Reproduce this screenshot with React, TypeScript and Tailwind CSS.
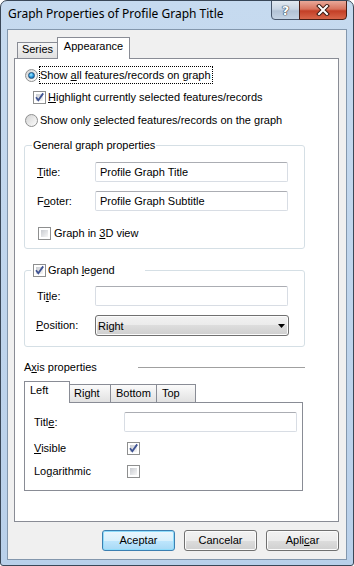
import type { ReactNode } from 'react';

/**
 * Graph properties dialog, Windows 7 look.
 */

const U = ({ children }: { children: ReactNode }) => (
  <span className="underline underline-offset-[1px] decoration-1">{children}</span>
);

const Radio = ({ checked = false }: { checked?: boolean }) => (
  <span className="w-[13px] h-[13px] shrink-0 rounded-full border border-[#8e8f8f] bg-[linear-gradient(135deg,#d3d3d3,#fdfdfd)] flex items-center justify-center">
    {checked && (
      <span className="w-[7px] h-[7px] rounded-full border border-[#1d4f7c] bg-[radial-gradient(circle_at_40%_35%,#a6ecff_0%,#2a9be0_50%,#125393_100%)]" />
    )}
  </span>
);

const Check = ({ checked = false }: { checked?: boolean }) => (
  <span className="relative w-[13px] h-[13px] shrink-0 border border-[#8e8f8f] bg-white p-[2px]">
    <span className="block w-full h-full bg-[linear-gradient(135deg,#c9ccd1,#f7f7f7)]" />
    {checked && (
      <svg className="absolute -left-px -top-px" width="13" height="13" viewBox="0 0 13 13">
        <path d="M3 6.3 L5.3 9.2 L10.2 2.4" stroke="#3f5393" strokeWidth="1.8" fill="none" />
      </svg>
    )}
  </span>
);

const TextBox = ({ value = '', width }: { value?: string; width: string }) => (
  <div
    className={`${width} h-[20px] border border-[#d8dde4] border-t-[#abadb3] rounded-[2px] bg-white flex items-center pl-[4px]`}
  >
    {value}
  </div>
);

const Button = ({ children, primary = false }: { children: ReactNode; primary?: boolean }) => (
  <div
    className={
      primary
        ? 'w-[73px] h-[21px] rounded-[3px] border border-[#3c7fb1] bg-[linear-gradient(#eaf6fd_0%,#d9f0fc_50%,#bee6fd_50%,#a7d9f5_100%)] shadow-[inset_0_0_0_1px_#8fdcfb] flex items-center justify-center'
        : 'w-[73px] h-[21px] rounded-[3px] border border-[#707070] bg-[linear-gradient(#f2f2f2_0%,#ebebeb_50%,#dddddd_50%,#cfcfcf_100%)] shadow-[inset_0_0_0_1px_#fbfbfb] flex items-center justify-center'
    }
  >
    <span>{children}</span>
  </div>
);

export default function App() {
  return (
    <div className="w-[354px] h-[566px] flex flex-col border border-[#3a4757] rounded-t-[7px] rounded-b-[3px] bg-[linear-gradient(#c6daef,#b9d0ea)] text-[11px] leading-[13px] text-black font-['Liberation_Sans',Arial,sans-serif] overflow-hidden">
      {/* Title bar */}
      <div className="h-[28px] flex items-start shrink-0">
        <span className="ml-[7px] mt-[5px] text-[12px] leading-[16px] font-['Noto_Sans',sans-serif] text-black">
          Graph Properties of Profile Graph Title
        </span>
        <div className="ml-auto mr-[6px] -mt-px flex">
          <div className="w-[29px] h-[20px] border border-[#46556a] rounded-bl-[4px] bg-[linear-gradient(#e2e9f1_0%,#c9d5e3_45%,#b2c2d5_55%,#c4d3e4_100%)] flex items-center justify-center text-[13px] font-bold text-white font-['DejaVu_Sans',sans-serif] [text-shadow:0_0_1px_#2b3746,0_0_1px_#2b3746,0_0_1px_#2b3746]">
            ?
          </div>
          <div className="-ml-px w-[48px] h-[20px] border border-[#4a1d14] rounded-br-[4px] bg-[linear-gradient(#e9a899_0%,#d8735d_45%,#c33f26_55%,#d8664a_100%)] flex items-center justify-center">
            <svg width="14" height="12" viewBox="0 0 14 12">
              <path d="M3 2 L11 10 M11 2 L3 10" stroke="#3b1a12" strokeWidth="4" strokeLinecap="square" />
              <path d="M3 2 L11 10 M11 2 L3 10" stroke="#ffffff" strokeWidth="2" strokeLinecap="square" />
            </svg>
          </div>
        </div>
      </div>

      {/* Client area */}
      <div className="flex-1 mx-[6px] mb-[5px] border border-[#8397ad] bg-[#f0f0f0] flex flex-col">
        <div className="ml-[6px] mt-[7px] w-[325px]">
          {/* Tab headers */}
          <div className="flex items-end h-[21px] pl-[3px]">
            <div className="w-[41px] h-[16px] border border-b-0 border-[#898c95] bg-[linear-gradient(#f6f6f6,#e0e0e0)] flex justify-center pt-0">
              Series
            </div>
            <div className="relative z-10 -ml-px -mb-px w-[73px] h-[22px] border border-b-0 border-[#898c95] bg-white flex justify-center pt-[2px]">
              Appearance
            </div>
          </div>

          {/* Tab panel */}
          <div className="h-[464px] border border-[#898c95] bg-white flex flex-col">
            <div className="mt-[7px] h-[18px] flex items-center pl-[10px]">
              <Radio checked />
              <span className="ml-px h-full flex items-center border border-dotted border-black pr-px">
                <span>
                  Show <U>a</U>ll features/records on graph
                </span>
              </span>
            </div>
            <div className="mt-[7px] h-[13px] flex items-center pl-[18px]">
              <Check checked />
              <span className="ml-[2px]">
                <U>H</U>ighlight currently selected features/records
              </span>
            </div>
            <div className="mt-[10px] h-[13px] flex items-center pl-[10px]">
              <Radio />
              <span className="ml-[2px]">
                Show only <U>s</U>elected features/records on the graph
              </span>
            </div>

            {/* General graph properties */}
            <div className="relative mt-[18px] ml-[9px] w-[281px] h-[104px] border border-[#d5dfe5] rounded-[3px] flex flex-col">
              <span className="absolute left-[7px] -top-[7px] bg-white px-px">General graph properties</span>
              <div className="mt-[16px] h-[20px] flex items-center">
                <span className="w-[70px] pl-[12px]">
                  <U>T</U>itle:
                </span>
                <TextBox width="w-[193px]" value="Profile Graph Title" />
              </div>
              <div className="mt-[9px] h-[20px] flex items-center">
                <span className="w-[70px] pl-[12px]">
                  F<U>o</U>oter:
                </span>
                <TextBox width="w-[193px]" value="Profile Graph Subtitle" />
              </div>
              <div className="mt-[16px] h-[13px] flex items-center pl-[13px]">
                <Check />
                <span className="ml-[3px]">
                  Graph in <U>3</U>D view
                </span>
              </div>
            </div>

            {/* Graph legend */}
            <div className="relative mt-[21px] ml-[9px] w-[281px] h-[77px] border border-[#d5dfe5] rounded-[3px] flex flex-col">
              <div className="absolute left-[6px] -top-[7px] w-[114px] h-[13px] bg-white pl-[2px] flex items-center">
                <Check checked />
                <span className="ml-[2px]">
                  Graph <U>l</U>egend
                </span>
              </div>
              <div className="mt-[15px] h-[20px] flex items-center">
                <span className="w-[70px] pl-[12px]">
                  Ti<U>t</U>le:
                </span>
                <TextBox width="w-[193px]" />
              </div>
              <div className="mt-[9px] h-[21px] flex items-center">
                <span className="w-[70px] pl-[11px]">
                  <U>P</U>osition:
                </span>
                <div className="w-[194px] h-[21px] rounded-[3px] border border-[#707070] bg-[linear-gradient(#f2f2f2_0%,#ebebeb_50%,#dddddd_50%,#cfcfcf_100%)] shadow-[inset_0_0_0_1px_#fbfbfb] flex items-center pl-[2px] pr-[3px]">
                  <span className="pt-[2px]">Right</span>
                  <svg className="ml-auto" width="7" height="4" viewBox="0 0 7 4">
                    <path d="M0 0 H7 L3.5 4 Z" fill="#000" />
                  </svg>
                </div>
              </div>
            </div>

            {/* Axis properties */}
            <div className="mt-[14px] ml-[9px] w-[281px] h-[13px] flex items-center">
              <span>
                A<U>x</U>is properties
              </span>
              <div className="ml-auto w-[167px] h-px bg-[#a0a0a0]" />
            </div>

            <div className="ml-[9px] mt-[7px] w-[279px]">
              <div className="flex items-end h-[21px]">
                <div className="relative z-10 -mb-px w-[46px] h-[22px] border border-b-0 border-[#898c95] bg-white pl-[5px] pt-[2px]">
                  Left
                </div>
                <div className="-ml-px w-[42px] h-[18px] border border-b-0 border-[#898c95] bg-[linear-gradient(#fbfbfb,#e1e1e1)] pl-[4px] pt-[2px]">
                  Right
                </div>
                <div className="-ml-px w-[47px] h-[18px] border border-b-0 border-[#898c95] bg-[linear-gradient(#fbfbfb,#e1e1e1)] pl-[5px] pt-[2px]">
                  Bottom
                </div>
                <div className="-ml-px w-[40px] h-[18px] border border-b-0 border-[#898c95] bg-[linear-gradient(#fbfbfb,#e1e1e1)] pl-[5px] pt-[2px]">
                  Top
                </div>
              </div>
              <div className="h-[89px] border border-[#898c95] bg-white flex flex-col">
                <div className="mt-[9px] h-[20px] flex items-center">
                  <span className="w-[99px] pl-[9px]">
                    Titl<U>e</U>:
                  </span>
                  <TextBox width="w-[173px]" />
                </div>
                <div className="mt-[10px] h-[13px] flex items-center">
                  <span className="w-[102px] pl-[9px]">
                    <U>V</U>isible
                  </span>
                  <Check checked />
                </div>
                <div className="mt-[10px] h-[13px] flex items-center">
                  <span className="w-[102px] pl-[9px]">
                    Lo<U>g</U>arithmic
                  </span>
                  <Check />
                </div>
              </div>
            </div>
          </div>
        </div>

        {/* Dialog buttons */}
        <div className="mt-[8px] pr-[7px] flex justify-end gap-[9px]">
          <Button primary>Aceptar</Button>
          <Button>Cancelar</Button>
          <Button>
            Apli<U>c</U>ar
          </Button>
        </div>
      </div>
    </div>
  );
}
